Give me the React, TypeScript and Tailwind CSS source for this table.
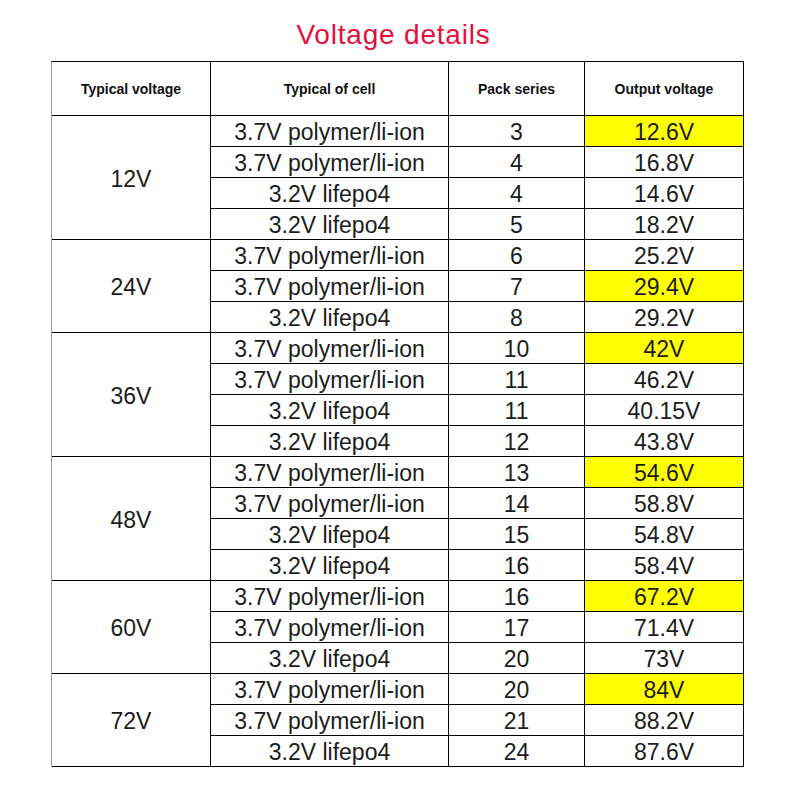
import React from "react";

type Row = { cell: string; series: number; out: string; hi?: boolean };

const groups: { label: string; rows: Row[] }[] = [
  {
    label: "12V",
    rows: [
      { cell: "3.7V polymer/li-ion", series: 3, out: "12.6V", hi: true },
      { cell: "3.7V polymer/li-ion", series: 4, out: "16.8V" },
      { cell: "3.2V lifepo4", series: 4, out: "14.6V" },
      { cell: "3.2V lifepo4", series: 5, out: "18.2V" },
    ],
  },
  {
    label: "24V",
    rows: [
      { cell: "3.7V polymer/li-ion", series: 6, out: "25.2V" },
      { cell: "3.7V polymer/li-ion", series: 7, out: "29.4V", hi: true },
      { cell: "3.2V lifepo4", series: 8, out: "29.2V" },
    ],
  },
  {
    label: "36V",
    rows: [
      { cell: "3.7V polymer/li-ion", series: 10, out: "42V", hi: true },
      { cell: "3.7V polymer/li-ion", series: 11, out: "46.2V" },
      { cell: "3.2V lifepo4", series: 11, out: "40.15V" },
      { cell: "3.2V lifepo4", series: 12, out: "43.8V" },
    ],
  },
  {
    label: "48V",
    rows: [
      { cell: "3.7V polymer/li-ion", series: 13, out: "54.6V", hi: true },
      { cell: "3.7V polymer/li-ion", series: 14, out: "58.8V" },
      { cell: "3.2V lifepo4", series: 15, out: "54.8V" },
      { cell: "3.2V lifepo4", series: 16, out: "58.4V" },
    ],
  },
  {
    label: "60V",
    rows: [
      { cell: "3.7V polymer/li-ion", series: 16, out: "67.2V", hi: true },
      { cell: "3.7V polymer/li-ion", series: 17, out: "71.4V" },
      { cell: "3.2V lifepo4", series: 20, out: "73V" },
    ],
  },
  {
    label: "72V",
    rows: [
      { cell: "3.7V polymer/li-ion", series: 20, out: "84V", hi: true },
      { cell: "3.7V polymer/li-ion", series: 21, out: "88.2V" },
      { cell: "3.2V lifepo4", series: 24, out: "87.6V" },
    ],
  },
];

const cellBase =
  "flex items-center justify-center pt-[3px] border-r border-b border-black text-[23px] leading-none text-[#1c1c1c]";
const headBase =
  "flex items-center justify-center pt-[2px] border-r border-b border-black text-[14px] font-bold text-[#111]";

export default function App() {
  return (
    <div
      className="w-[800px] h-[800px] bg-white"
      style={{ fontFamily: '"Liberation Sans", Arial, sans-serif' }}
    >
      <div className="ml-[51px] w-[693px] pt-[19px]">
        {/* Title */}
        <h1 className="text-center pr-2 text-[28px] leading-[32px] tracking-[0.8px] text-[#e3103c] mb-[10px]">
          Voltage details
        </h1>

        {/* Table */}
        <div className="grid grid-cols-[159px_238px_136px_159px] grid-rows-[54px_repeat(21,31px)] border-l border-l-[#9a9a9a] border-t border-t-black">
          <div className={headBase}>Typical voltage</div>
          <div className={headBase}>Typical of cell</div>
          <div className={headBase}>Pack series</div>
          <div className={headBase}>Output voltage</div>

          {groups.map((g) => (
            <React.Fragment key={g.label}>
              <div
                className={`${cellBase} text-[22px] ${g.rows.length === 4 ? "row-span-4" : "row-span-3"}`}
                style={{ gridColumn: 1 }}
              >
                {g.label}
              </div>
              {g.rows.map((r, i) => (
                <React.Fragment key={i}>
                  <div className={`${cellBase} col-start-2`}>{r.cell}</div>
                  <div className={`${cellBase} col-start-3`}>{r.series}</div>
                  <div className={`${cellBase} col-start-4 ${r.hi ? "bg-[#ffff00]" : ""}`}>
                    {r.out}
                  </div>
                </React.Fragment>
              ))}
            </React.Fragment>
          ))}
        </div>
      </div>
    </div>
  );
}
